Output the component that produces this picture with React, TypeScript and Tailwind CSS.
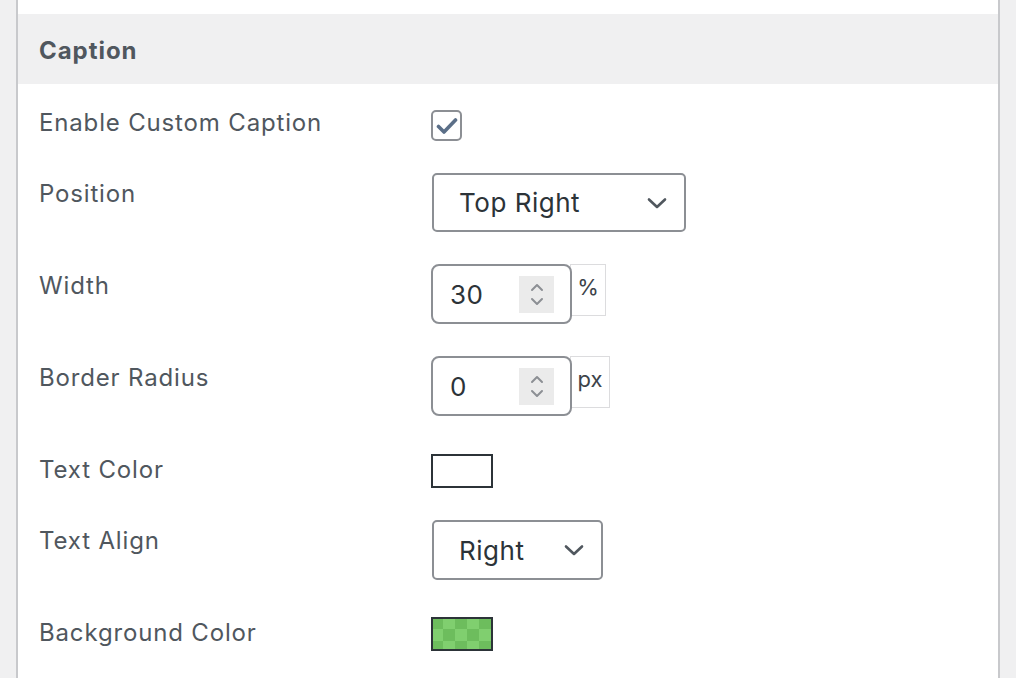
import React from "react";

const font = { fontFamily: 'Inter, "Noto Sans", "Liberation Sans", sans-serif' };

function Chevron({ className = "" }: { className?: string }) {
  return (
    <svg width="22" height="14" viewBox="0 0 22 14" className={className}>
      <path d="M3 3.5 L11 11 L19 3.5" fill="none" stroke="#50575e" strokeWidth="2.6" strokeLinecap="round" strokeLinejoin="round" />
    </svg>
  );
}

function Spinner() {
  return (
    <div className="w-[35px] h-[37px] bg-[#ebebeb] flex flex-col items-center justify-center gap-[5px]">
      <svg width="14" height="9" viewBox="0 0 14 9">
        <path d="M2 7 L7 2 L12 7" fill="none" stroke="#8c8f94" strokeWidth="2" strokeLinecap="round" strokeLinejoin="round" />
      </svg>
      <svg width="14" height="9" viewBox="0 0 14 9">
        <path d="M2 2 L7 7 L12 2" fill="none" stroke="#8c8f94" strokeWidth="2" strokeLinecap="round" strokeLinejoin="round" />
      </svg>
    </div>
  );
}

function NumberField({ value, unit, unitW }: { value: string; unit: string; unitW: string }) {
  return (
    <div className="flex items-start">
      <div className="relative z-10 w-[141px] h-[60px] border-2 border-[#8c8f94] rounded-[8px] bg-white flex items-center pl-[17px] pr-[16px]">
        <span className="text-[26px] text-[#2c3338] tracking-[0.02em] flex-1">{value}</span>
        <Spinner />
      </div>
      <div className={`${unitW} h-[52px] -ml-[2px] border border-[#dcdcde] bg-white flex items-center justify-center text-[22px] text-[#3c434a] pb-[6px]`}>
        {unit}
      </div>
    </div>
  );
}

function Row({ label, labelPt, h, children }: { label: string; labelPt: string; h: string; children: React.ReactNode }) {
  return (
    <div className={`flex items-start ${h}`}>
      <div className={`w-[392px] text-[24px] leading-[32px] text-[#50575e] tracking-[0.035em] ${labelPt}`}>{label}</div>
      <div>{children}</div>
    </div>
  );
}

export default function App() {
  return (
    <div className="w-[1016px] h-[678px] bg-[#f0f0f1] overflow-hidden" style={font}>
      <div className="ml-[16px] w-[984px] h-[678px] bg-white border-x-2 border-[#c8c9cc]">
        <div className="h-[14px]" />
        <div className="h-[70px] bg-[#f0f0f1] flex items-center pl-[21px] pt-[3px]">
          <span className="text-[24px] font-bold text-[#50575e] tracking-[0.04em]">Caption</span>
        </div>
        <div className="pl-[21px] pt-[26px]">
          <Row label="Enable Custom Caption" labelPt="-mt-[3px]" h="h-[63px]">
            <div className="w-[31px] h-[31px] border-2 border-[#8c8f94] rounded-[5px] bg-white flex items-center justify-center">
              <svg width="22" height="18" viewBox="0 0 22 18">
                <path d="M2.5 9.5 L8 15 L19.5 3" fill="none" stroke="#5b6f88" strokeWidth="3.6" strokeLinecap="round" strokeLinejoin="round" />
              </svg>
            </div>
          </Row>
          <Row label="Position" labelPt="pt-[5px]" h="h-[91px]">
            <div className="ml-[1px] w-[254px] h-[59px] border-2 border-[#8c8f94] rounded-[5px] flex items-center justify-between pl-[25px] pr-[16px]">
              <span className="text-[26px] text-[#2c3338] tracking-[0.02em]">Top Right</span>
              <Chevron />
            </div>
          </Row>
          <Row label="Width" labelPt="pt-[6px]" h="h-[92px]">
            <NumberField value="30" unit="%" unitW="w-[36px]" />
          </Row>
          <Row label="Border Radius" labelPt="pt-[6px]" h="h-[98px]">
            <NumberField value="0" unit="px" unitW="w-[40px]" />
          </Row>
          <Row label="Text Color" labelPt="mt-0" h="h-[66px]">
            <div className="w-[62px] h-[34px] border-2 border-[#2c3338] bg-white" />
          </Row>
          <Row label="Text Align" labelPt="pt-[5px]" h="h-[97px]">
            <div className="ml-[1px] w-[171px] h-[60px] border-2 border-[#8c8f94] rounded-[5px] flex items-center justify-between pl-[25px] pr-[16px]">
              <span className="text-[26px] text-[#2c3338] tracking-[0.02em]">Right</span>
              <Chevron />
            </div>
          </Row>
          <Row label="Background Color" labelPt="mt-0" h="h-[60px]">
            <div className="w-[62px] h-[34px] border-2 border-[#2c3338]">
              <svg width="58" height="30" className="block">
                <defs>
                  <pattern id="chk" width="24" height="24" patternUnits="userSpaceOnUse" x="-2" y="-2">
                    <rect width="24" height="24" fill="#80cf6f" />
                    <rect width="12" height="12" fill="#6dbd5d" />
                    <rect x="12" y="12" width="12" height="12" fill="#6dbd5d" />
                  </pattern>
                </defs>
                <rect width="58" height="30" fill="url(#chk)" />
              </svg>
            </div>
          </Row>
        </div>
      </div>
    </div>
  );
}
